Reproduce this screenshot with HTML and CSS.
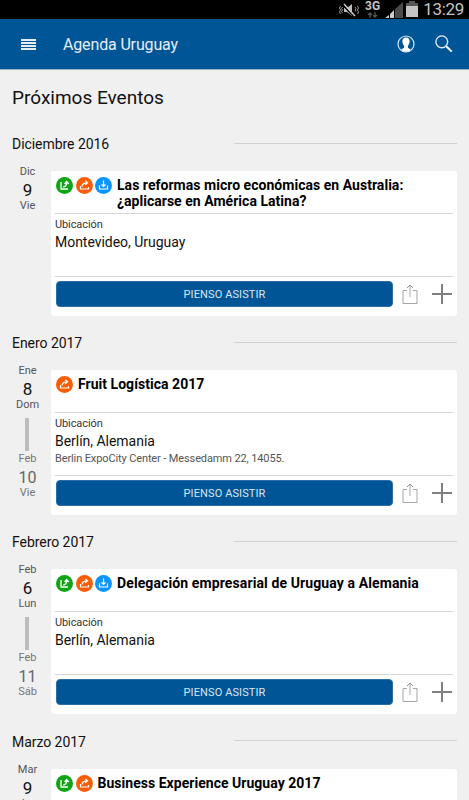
FILE: index.html
```html
<!DOCTYPE html>
<html lang="es">
<head>
    <meta charset="UTF-8">
    <meta name="viewport" content="width=device-width, initial-scale=1.0">
    <title>Agenda Uruguay</title>
    <link rel="stylesheet" href="styles.css">
</head>
<body>

<!-- Iconos reutilizables -->
<svg class="sprite" width="0" height="0">
    <symbol id="verde" viewBox="0 0 17 17">
        <circle cx="8.5" cy="8.5" r="8.5" fill="#0fa516"/>
        <path d="M5 5v7h7M7 9.800c2.500 0 3.700-1.500 3.700-4M8.600 7l2.100-2.500L12.800 7" fill="none" stroke="#fff" stroke-width="1.300"/>
    </symbol>
    <symbol id="naranja" viewBox="0 0 17 17">
        <circle cx="8.5" cy="8.5" r="8.5" fill="#fa5d05"/>
        <path d="M4.500 9v3h8v-2M6 9.500c.2-2.400 1.500-3.700 5-3.700M9.300 3.700l2.300 2.100-2.300 2.100" fill="none" stroke="#fff" stroke-width="1.200"/>
    </symbol>
    <symbol id="azul" viewBox="0 0 17 17">
        <circle cx="8.5" cy="8.5" r="8.5" fill="#0c96fb"/>
        <path d="M4.500 8.500V12h8V8.500M8.500 3.500v6M6.500 7.500l2 2 2-2" fill="none" stroke="#fff" stroke-width="1.200"/>
    </symbol>
    <symbol id="compartir" viewBox="0 0 16 21">
        <path d="M5 6.500H1v13h14v-13h-4" fill="none" stroke="#a5a5aa" stroke-width="1"/>
        <path d="M8 13V1.500" fill="none" stroke="#c4c4c8" stroke-width="1.500"/>
        <path d="M5 4l3-3 3 3" fill="none" stroke="#929298" stroke-width="1"/>
    </symbol>
    <symbol id="mas" viewBox="0 0 20 20">
        <path d="M0 10h20M10 0v20" stroke="#808080" stroke-width="2"/>
    </symbol>
</svg>

<div class="status">
    <svg class="mute" width="20" height="14" viewBox="0 0 20 14">
        <path d="M5 5h3l5-4v12l-5-4H5z" fill="#bbb"/>
        <path d="M4 2l11 12" stroke="#000" stroke-width="1.500"/>
        <path d="M5 1l11 12" stroke="#ccc" stroke-width="1.400"/>
        <path d="M1.500 3l-1 2 1 2-1 2 1 2M3.500 4l-1 1.500 1 1.500-1 1.500 1 1.500M16 4l1 1.500-1 1.500 1 1.500M18.500 3l1 2-1 2 1 2-1 2" fill="none" stroke="#999" stroke-width="1"/>
    </svg>
    <div class="network">
        <span>3G</span>
        <svg width="11" height="6" viewBox="0 0 11 6">
            <path d="M3 6V1M1 3l2-2 2 2M8 0v5M6 3l2 2 2-2" fill="none" stroke="#555" stroke-width="1.300"/>
        </svg>
    </div>
    <svg class="signal" width="18" height="16" viewBox="0 0 18 16">
        <path d="M18 0v16H10V7z" fill="#4a4a4a"/>
        <path d="M9 8v8H5v-4zM4 13v3H0z" fill="#ccc"/>
    </svg>
    <svg class="battery" width="12" height="16" viewBox="0 0 12 16">
        <path d="M3 0h6v2h3v3H0V2h3z" fill="#555"/>
        <path d="M0 5h12v11H0z" fill="#c4c4c4"/>
    </svg>
    <span class="clock">13:29</span>
</div>

<header class="toolbar">
    <svg class="menu" width="15" height="12" viewBox="0 0 15 12">
        <path d="M0 2h15M0 5h15M0 8h15M0 11h15" stroke="#e6edf5" stroke-width="2"/>
    </svg>
    <span class="app-name">Agenda Uruguay</span>
    <svg class="user" width="18" height="18" viewBox="0 0 18 18">
        <circle cx="9" cy="9" r="8" fill="none" stroke="#dce8f3" stroke-width="1.200"/>
        <path d="M9 2.500c-2.600 0-3.800 1.700-3.600 4 .1 2 .8 3.200 1.700 4.200v2L4.200 14.500C6.500 17.500 11.500 17.500 13.800 14.500L10.900 12.700v-2c.9-1 1.600-2.200 1.700-4.200.2-2.300-1-4-3.600-4z" fill="#fff"/>
    </svg>
    <svg class="search" width="18" height="18" viewBox="0 0 18 18">
        <circle cx="6.800" cy="6.800" r="5.900" fill="none" stroke="#dfeaf4" stroke-width="1.400"/>
        <path d="M11.200 11.200l5.600 5.400" stroke="#fff" stroke-width="2"/>
    </svg>
</header>

<main>
    <h1>Próximos Eventos</h1>

    <section class="month">
        <div class="month-head"><h2>Diciembre 2016</h2><div class="rule"></div></div>
        <div class="event">
            <div class="date">
                <span class="small">Dic</span>
                <span class="day">9</span>
                <span class="small">Vie</span>
            </div>
            <article class="card">
                <div class="title">
                    <div class="tags">
                        <svg><use href="#verde"/></svg>
                        <svg><use href="#naranja"/></svg>
                        <svg><use href="#azul"/></svg>
                    </div>
                    <h3>Las reformas micro económicas en Australia:<br>¿aplicarse en América Latina?</h3>
                </div>
                <div class="place">
                    <div class="label">Ubicación</div>
                    <div class="city">Montevideo, Uruguay</div>
                </div>
                <div class="actions">
                    <button>PIENSO ASISTIR</button>
                    <svg class="share"><use href="#compartir"/></svg>
                    <svg class="add"><use href="#mas"/></svg>
                </div>
            </article>
        </div>
    </section>

    <section class="month">
        <div class="month-head"><h2>Enero 2017</h2><div class="rule"></div></div>
        <div class="event">
            <div class="date">
                <span class="small">Ene</span>
                <span class="day">8</span>
                <span class="small">Dom</span>
                <div class="until">
                    <span class="small">Feb</span>
                    <span class="day">10</span>
                    <span class="small">Vie</span>
                </div>
            </div>
            <article class="card">
                <div class="title">
                    <div class="tags">
                        <svg><use href="#naranja"/></svg>
                    </div>
                    <h3>Fruit Logística 2017</h3>
                </div>
                <div class="place">
                    <div class="label">Ubicación</div>
                    <div class="city">Berlín, Alemania</div>
                    <div class="address">Berlin ExpoCity Center - Messedamm 22, 14055.</div>
                </div>
                <div class="actions">
                    <button>PIENSO ASISTIR</button>
                    <svg class="share"><use href="#compartir"/></svg>
                    <svg class="add"><use href="#mas"/></svg>
                </div>
            </article>
        </div>
    </section>

    <section class="month">
        <div class="month-head"><h2>Febrero 2017</h2><div class="rule"></div></div>
        <div class="event">
            <div class="date">
                <span class="small">Feb</span>
                <span class="day">6</span>
                <span class="small">Lun</span>
                <div class="until">
                    <span class="small">Feb</span>
                    <span class="day">11</span>
                    <span class="small">Sáb</span>
                </div>
            </div>
            <article class="card">
                <div class="title">
                    <div class="tags">
                        <svg><use href="#verde"/></svg>
                        <svg><use href="#naranja"/></svg>
                        <svg><use href="#azul"/></svg>
                    </div>
                    <h3 class="wide">Delegación empresarial de Uruguay a Alemania</h3>
                </div>
                <div class="place">
                    <div class="label">Ubicación</div>
                    <div class="city">Berlín, Alemania</div>
                </div>
                <div class="actions">
                    <button>PIENSO ASISTIR</button>
                    <svg class="share"><use href="#compartir"/></svg>
                    <svg class="add"><use href="#mas"/></svg>
                </div>
            </article>
        </div>
    </section>

    <section class="month">
        <div class="month-head"><h2>Marzo 2017</h2><div class="rule"></div></div>
        <div class="event">
            <div class="date">
                <span class="small">Mar</span>
                <span class="day">9</span>
                <span class="small">Jue</span>
            </div>
            <article class="card">
                <div class="title">
                    <div class="tags">
                        <svg><use href="#verde"/></svg>
                        <svg><use href="#naranja"/></svg>
                    </div>
                    <h3>Business Experience Uruguay 2017</h3>
                </div>
            </article>
        </div>
    </section>
</main>

</body>
</html>
```
FILE: styles.css
```css
* {
    box-sizing: border-box;
}

body {
    margin: 0;
    height: 800px;
    overflow: hidden;
    display: flex;
    flex-direction: column;
    background-color: #f0f0f0;
    font-family: Roboto, sans-serif;
    color: #111;
}

svg {
    display: block;
    flex: none;
}

.sprite {
    position: absolute;
}

h1, h2, h3 {
    margin: 0;
    font-weight: normal;
}

/* Barra de estado */
.status {
    flex: none;
    height: 19px;
    padding-right: 5px;
    display: flex;
    justify-content: flex-end;
    align-items: flex-start;
    background-color: #000;
    color: #c4c4c4;
}

.mute {
    margin: 3px 5px 0 0;
}

.network {
    width: 17px;
    margin-right: 4px;
    display: flex;
    flex-direction: column;
    align-items: center;
    font-size: 12px;
    font-weight: bold;
    line-height: 12px;
}

.signal {
    margin: 2px 3px 0 0;
}

.battery {
    margin: 1px 5px 0 0;
}

.clock {
    font-size: 17px;
    line-height: 19px;
    letter-spacing: -0.3px;
}

/* Cabecera */
.toolbar {
    flex: none;
    height: 51px;
    padding: 0 16px 0 21px;
    display: flex;
    align-items: center;
    background-color: #005596;
    border-bottom: 1px solid #9fb0bf;
}

.app-name {
    flex: 1;
    margin-left: 27px;
    font-size: 16px;
    letter-spacing: -0.15px;
    color: #e6edf5;
}

.search {
    margin-left: 20px;
}

main {
    flex: 1;
    min-height: 0;
    overflow: hidden;
}

h1 {
    height: 57px;
    padding: 15px 12px 0;
    font-size: 19px;
    line-height: 25px;
}

/* Meses */
.month {
    height: 199.2px;
}

.month-head {
    height: 34px;
    padding: 0 12px;
    display: flex;
    align-items: center;
    justify-content: space-between;
}

h2 {
    font-size: 14px;
    letter-spacing: -0.05px;
}

.rule {
    width: 223px;
    height: 1px;
    margin-top: -2px;
    background-color: #d2d2d2;
}

.event {
    display: flex;
    align-items: flex-start;
    padding-right: 12px;
}

.date {
    width: 51px;
    padding: 4px 0 0 4px;
    display: flex;
    flex-direction: column;
    align-items: center;
    color: #555;
}

.small {
    font-size: 11px;
    line-height: 14px;
}

.day {
    height: 20px;
    font-size: 17px;
    line-height: 23px;
    color: #111;
}

.until {
    display: flex;
    flex-direction: column;
    align-items: center;
    color: #777;
}

.until::before {
    content: "";
    width: 4px;
    height: 33px;
    margin: 6px 0 1px;
    background-color: #bcbcbc;
}

.until .day {
    font-size: 16px;
    color: #666;
}

.card {
    flex: 1;
    height: 145px;
    margin-top: 10px;
    padding: 0 4px;
    display: flex;
    flex-direction: column;
    background-color: #fff;
    border-radius: 3px;
}

.title {
    height: 43px;
    padding: 6px 1px 0;
    display: flex;
    gap: 5px;
    border-bottom: 1px solid #d6d6d6;
}

.tags {
    display: flex;
    gap: 2.5px;
}

.tags svg {
    width: 17px;
    height: 17px;
}

h3 {
    font-size: 14px;
    font-weight: bold;
    line-height: 16px;
    letter-spacing: 0.03px;
    color: #000;
}

.wide {
    letter-spacing: 0.11px;
}

.place {
    height: 63px;
    padding-top: 4px;
    border-bottom: 1px solid #d6d6d6;
}

.label {
    font-size: 11px;
    line-height: 14px;
    letter-spacing: -0.1px;
    color: #333;
}

.city {
    font-size: 14px;
    line-height: 21px;
    letter-spacing: -0.03px;
}

.address {
    font-size: 11px;
    line-height: 14px;
    letter-spacing: -0.12px;
    color: #555;
}

.actions {
    display: flex;
    align-items: center;
    padding: 4px 1px 0;
}

button {
    width: 337px;
    height: 26px;
    padding: 0;
    border: 1px solid #2c6da5;
    border-radius: 4px;
    background-color: #005596;
    color: #dbe7f2;
    font-family: inherit;
    font-size: 11px;
    letter-spacing: 0.1px;
}

.share {
    width: 16px;
    height: 21px;
    margin-left: 9px;
}

.add {
    width: 20px;
    height: 20px;
    margin-left: 14px;
}
```
